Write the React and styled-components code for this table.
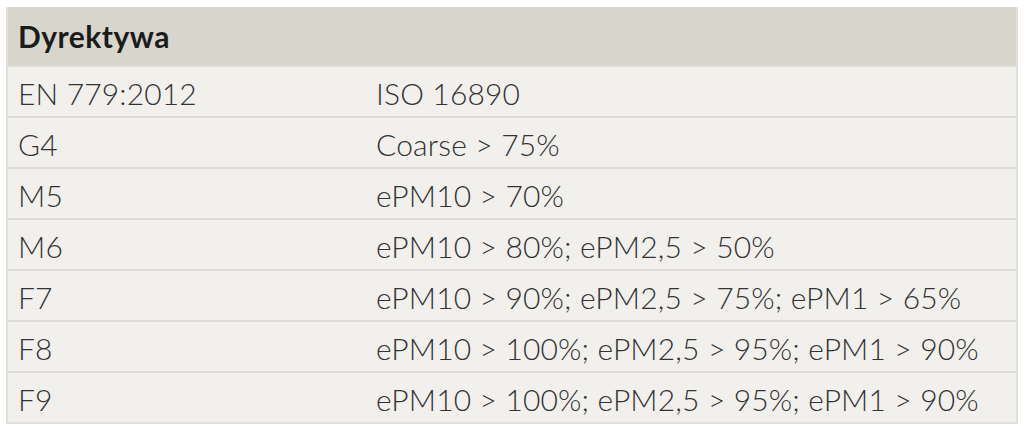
import React from "react";
import styled, { createGlobalStyle } from "styled-components";

const GlobalStyle = createGlobalStyle`
  body {
    margin: 0;
    background: #ffffff;
    font-family: Lato, "Open Sans", sans-serif;
  }
`;

const Page = styled.div`
  padding: 7px 6px 0 6px;
  width: 1024px;
  box-sizing: border-box;
`;

const Table = styled.div`
  width: 1012px;
  border: 2px solid #e2e0db;
  border-top: none;
  box-sizing: border-box;
`;

const Header = styled.div`
  height: 58px;
  background: #d8d6cc;
  display: flex;
  align-items: center;
  padding-left: 10px;
  font-size: 30px;
  font-weight: 700;
  letter-spacing: 0.5px;
  color: #1b1b1b;
`;

const Row = styled.div`
  display: grid;
  grid-template-columns: 358px 1fr;
  align-items: center;
  height: 51px;
  box-sizing: border-box;
  background: #f2f0ed;
  border-top: 2px solid #dddbd6;
  padding-left: 10px;
  font-size: 30px;
  font-weight: 300;
  letter-spacing: 0.15px;
  color: #333333;
`;

const Cell = styled.div`
  white-space: nowrap;
  padding-top: 3px;
`;

const rows = [
  ["EN 779:2012", "ISO 16890"],
  ["G4", "Coarse > 75%"],
  ["M5", "ePM10 > 70%"],
  ["M6", "ePM10 > 80%; ePM2,5 > 50%"],
  ["F7", "ePM10 > 90%; ePM2,5 > 75%; ePM1 > 65%"],
  ["F8", "ePM10 > 100%; ePM2,5 > 95%; ePM1 > 90%"],
  ["F9", "ePM10 > 100%; ePM2,5 > 95%; ePM1 > 90%"],
];

export default function App() {
  return (
    <>
      <GlobalStyle />
      <Page>
        <Table>
          <Header>Dyrektywa</Header>
          {rows.map(([a, b]) => (
            <Row key={a}>
              <Cell>{a}</Cell>
              <Cell>{b}</Cell>
            </Row>
          ))}
        </Table>
      </Page>
    </>
  );
}
